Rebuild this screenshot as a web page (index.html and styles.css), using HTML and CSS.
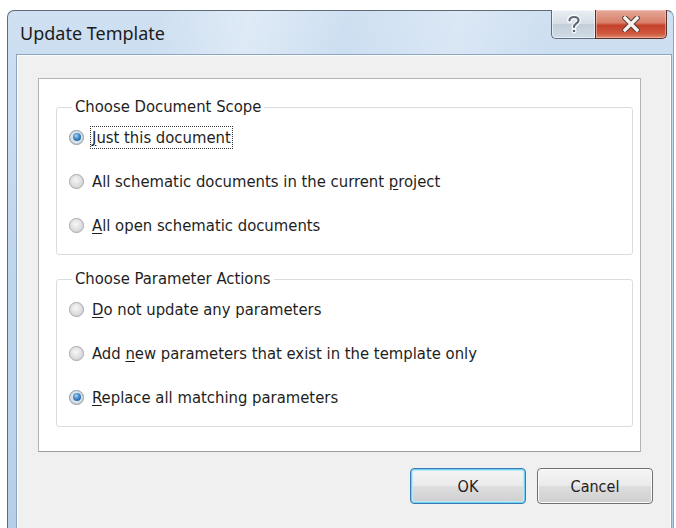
FILE: index.html
```html
<!DOCTYPE html>
<html lang="en">
<head>
<meta charset="utf-8">
<title>Update Template</title>
<link rel="stylesheet" href="styles.css">
</head>
<body>
<div class="window">
  <div class="titlebar">
    <span class="title">Update Template</span>
    <div class="caption-buttons">
      <div class="cap help">
        <svg width="16" height="20" viewBox="0 0 16 20">
          <path d="M3.5 6.5 C3.5 1.8 12.5 1.8 12.5 6.5 C12.5 9.5 8 9.5 8 13" fill="none" stroke="#fbfcfd" stroke-width="5" stroke-linecap="round"/>
          <path d="M3.5 6.5 C3.5 1.8 12.5 1.8 12.5 6.5 C12.5 9.5 8 9.5 8 13" fill="none" stroke="#5e6975" stroke-width="2.2" stroke-linecap="round"/>
          <circle cx="8" cy="17" r="2.5" fill="#fbfcfd"/>
          <circle cx="8" cy="17" r="1.3" fill="#5e6975"/>
        </svg>
      </div>
      <div class="cap close">
        <svg width="18" height="16" viewBox="0 0 18 16">
          <path d="M3 2 L15 14 M15 2 L3 14" stroke="#5c3a34" stroke-width="5.4" stroke-linecap="square"/>
          <path d="M3 2 L15 14 M15 2 L3 14" stroke="#f6f2f0" stroke-width="3.4" stroke-linecap="square"/>
        </svg>
      </div>
    </div>
  </div>
  <div class="client">
    <div class="panel">
      <fieldset class="group">
        <legend>Choose Document Scope</legend>
        <div class="option"><span class="radio checked"></span><span class="text focus"><u>J</u>ust this document</span></div>
        <div class="option"><span class="radio"></span><span class="text">All schematic documents in the current <u>p</u>roject</span></div>
        <div class="option"><span class="radio"></span><span class="text"><u>A</u>ll open schematic documents</span></div>
      </fieldset>
      <fieldset class="group">
        <legend>Choose Parameter Actions</legend>
        <div class="option"><span class="radio"></span><span class="text"><u>D</u>o not update any parameters</span></div>
        <div class="option"><span class="radio"></span><span class="text">Add <u>n</u>ew parameters that exist in the template only</span></div>
        <div class="option"><span class="radio checked"></span><span class="text"><u>R</u>eplace all matching parameters</span></div>
      </fieldset>
    </div>
    <div class="actions">
      <button class="btn default">OK</button>
      <button class="btn">Cancel</button>
    </div>
  </div>
</div>
</body>
</html>
```

FILE: styles.css
```css
html, body {
  margin: 0;
  padding: 0;
  background: #ffffff;
}

body {
  width: 676px;
  height: 528px;
  overflow: hidden;
}

/* Aero-style window frame */
.window {
  margin: 10px 0 0 7px;
  width: 667px;
  height: 522px;
  box-sizing: border-box;
  border: 1px solid #5d6b79;
  border-right-color: #8fa5bb;
  border-radius: 7px 7px 0 0;
  background:
    linear-gradient(100deg, rgba(255,255,255,0) 20%, rgba(255,255,255,0.35) 32%, rgba(255,255,255,0) 45%, rgba(255,255,255,0.25) 60%, rgba(255,255,255,0) 72%),
    linear-gradient(to bottom, #cfe0f2 0%, #c2d7ed 40%, #b6cfe8 100%);
  padding: 0 2px 0 9px;
  display: flex;
  flex-direction: column;
}

.titlebar {
  height: 44px;
  display: flex;
  align-items: flex-start;
}

.title {
  font-family: "Noto Sans", "Open Sans", sans-serif;
  font-size: 18px;
  color: #1b1b1b;
  margin: 10px 0 0 3px;
}

.caption-buttons {
  margin-left: auto;
  margin-right: 4px;
  margin-top: -1px;
  display: flex;
}

.cap {
  height: 29px;
  box-sizing: border-box;
  display: flex;
  align-items: center;
  justify-content: center;
  border: 1px solid #5f6d7b;
  border-top: none;
}

.help {
  width: 44px;
  border-radius: 0 0 0 5px;
  border-right: none;
  background: linear-gradient(to bottom, #e9eef3 0%, #d6dee6 48%, #c3ced9 52%, #cfdbe6 100%);
  box-shadow: inset 0 0 0 1px rgba(255,255,255,0.55);
}

.close {
  width: 72px;
  border-radius: 0 0 5px 0;
  border-color: #5a2f28;
  background: linear-gradient(to bottom, #e6a898 0%, #d8806b 45%, #c5402a 55%, #cf5a40 85%, #e08a70 100%);
  box-shadow: inset 0 0 0 1px rgba(255,220,210,0.45);
}

/* Client area */
.client {
  flex: 1;
  background: #f0f0f0;
  border: 1px solid #fafcfe;
  box-shadow: 0 0 0 1px #8da5bd;
  padding: 22px 29px 0 20px;
  display: flex;
  flex-direction: column;
  font-family: "DejaVu Sans Condensed", "DejaVu Sans", sans-serif;
  font-size: 16.5px;
  color: #1e1e1e;
}

.panel {
  height: 374px;
  box-sizing: border-box;
  background: #ffffff;
  border: 1px solid #b3b3b3;
  border-bottom-color: #9c9c9c;
  padding: 19px 7px 0 17px;
  display: flex;
  flex-direction: column;
  gap: 15px;
}

.group {
  margin: 0;
  border: 1px solid #d8dde2;
  border-radius: 3px;
  padding: 6px 0 14px 12px;
  display: flex;
  flex-direction: column;
  gap: 14px;
}

.group legend {
  padding: 0 3px;
  margin-left: 3px;
  line-height: 18px;
}

.option {
  height: 30px;
  display: flex;
  align-items: center;
  gap: 8px;
}

.text u {
  text-decoration-thickness: 1px;
  text-underline-offset: 2px;
}

.focus {
  outline: 1px dotted #333333;
  outline-offset: 1px;
}

/* Win7-style radio buttons */
.radio {
  width: 15px;
  height: 15px;
  box-sizing: border-box;
  border-radius: 50%;
  border: 1px solid #a5aab0;
  background: radial-gradient(circle at 45% 40%, #f7f7f7 0%, #e2e2e2 45%, #c9c9c9 100%);
  box-shadow: 0 0 1px rgba(0,0,0,0.15);
  flex: none;
  display: flex;
  align-items: center;
  justify-content: center;
}

.radio.checked {
  border-color: #8e9ba8;
  background: radial-gradient(circle at 50% 45%, #f4f6f8 0%, #d6dde4 60%, #b9c3cc 100%);
}

.radio.checked::after {
  content: "";
  width: 8px;
  height: 8px;
  border-radius: 50%;
  background: radial-gradient(circle at 40% 35%, #a9d6f5 0%, #3f86c6 45%, #1a4f86 100%);
}

/* Dialog buttons */
.actions {
  display: flex;
  justify-content: flex-end;
  gap: 11px;
  margin-top: 16px;
  margin-right: -12px;
}

.btn {
  width: 116px;
  height: 36px;
  box-sizing: border-box;
  font-family: "DejaVu Sans Condensed", "DejaVu Sans", sans-serif;
  font-size: 16px;
  color: #1e1e1e;
  border: 1px solid #707070;
  border-radius: 4px;
  background: linear-gradient(to bottom, #f4f4f4 0%, #ebebeb 48%, #dddddd 52%, #cfcfcf 100%);
  box-shadow: inset 0 0 0 1px #fbfbfb;
  padding: 0;
}

.btn.default {
  border-color: #3a7ab2;
  box-shadow: inset 0 0 0 1px #6fd2f2, inset 0 0 0 2px #bde9f7;
}
```
